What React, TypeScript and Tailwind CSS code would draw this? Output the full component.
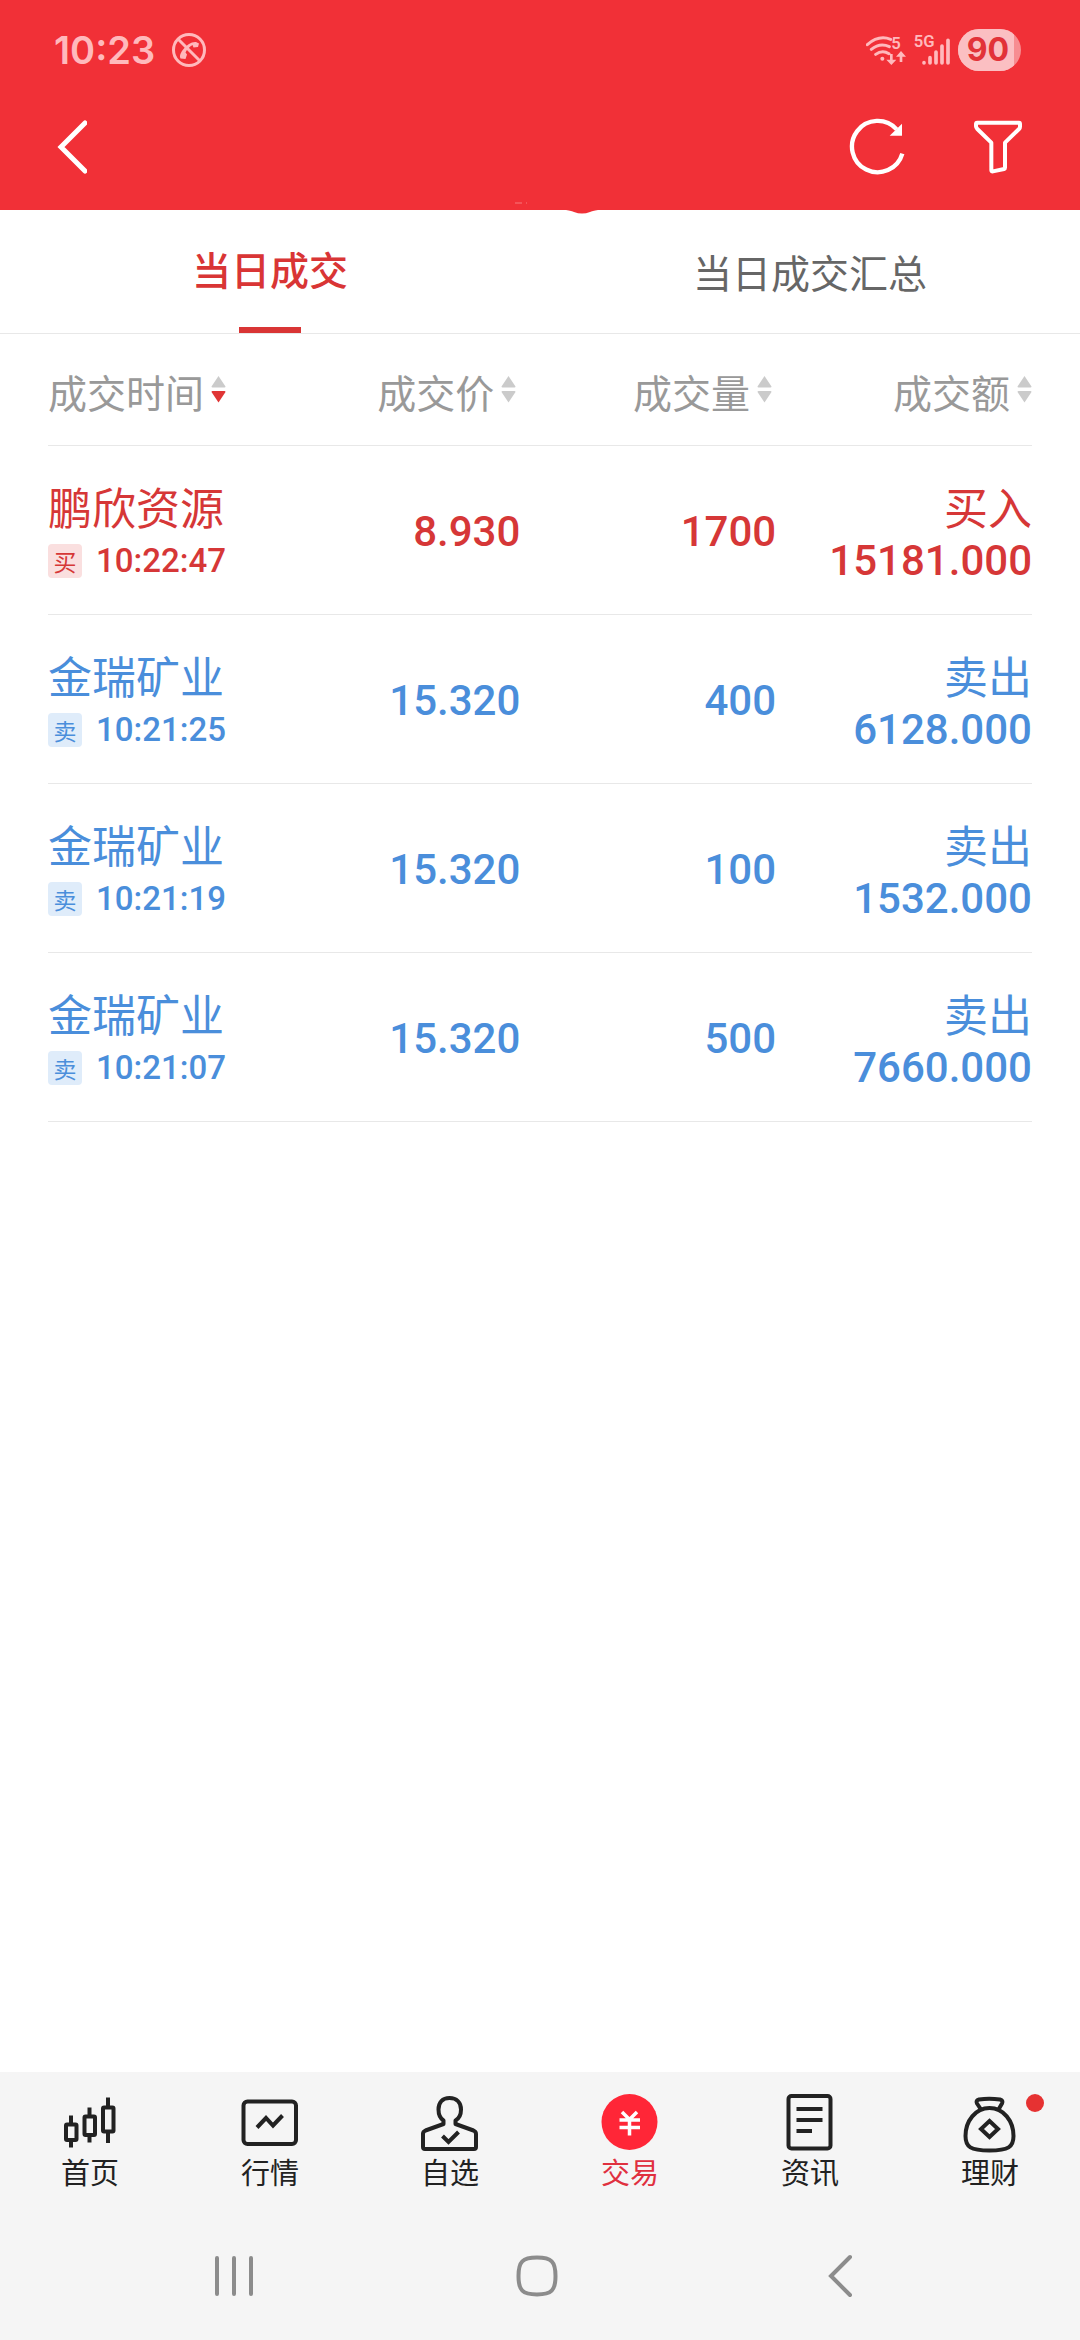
import { useState } from 'react';
import type { ReactNode } from 'react';
import clsx from 'clsx';

type Trade = {
  id: number;
  name: string;
  side: 'buy' | 'sell';
  time: string;
  price: string;
  volume: string;
  amount: string;
};

const trades: Trade[] = [
  { id: 1, name: '鹏欣资源', side: 'buy', time: '10:22:47', price: '8.930', volume: '1700', amount: '15181.000' },
  { id: 2, name: '金瑞矿业', side: 'sell', time: '10:21:25', price: '15.320', volume: '400', amount: '6128.000' },
  { id: 3, name: '金瑞矿业', side: 'sell', time: '10:21:19', price: '15.320', volume: '100', amount: '1532.000' },
  { id: 4, name: '金瑞矿业', side: 'sell', time: '10:21:07', price: '15.320', volume: '500', amount: '7660.000' },
];

const tabs = ['当日成交', '当日成交汇总'];

function StatusBar() {
  return (
    <div className="flex h-[100px] items-center justify-between pl-[54px] pr-[59px] text-[#ffb9bc]">
      <div className="flex items-center gap-4">
        <span className="font-['Inter',sans-serif] text-[38px] font-semibold leading-10">10:23</span>
        <svg className="h-9 w-9" viewBox="0 0 36 36" fill="none" stroke="currentColor" strokeWidth="3">
          <circle cx="18" cy="18" r="15.5" />
          <path d="M7 7l22 22" />
          <path d="M9.500 26.500c-1.500-3 .5-6.500 3.500-10s7.500-7 12-6.500l3 1.500-1 3.500-4.500.5-1-2.500c-3 1.500-6 5-7 7.500l1.500 2-1.500 4.500z" fill="currentColor" stroke="none" />
        </svg>
      </div>
      <div className="flex items-center gap-2">
        <svg className="h-9 w-10" viewBox="196 96 120 108" fill="none" stroke="currentColor" strokeWidth="9">
          <path d="M200 134q34-30 70-16M212 148q26-21 54-8M225 163q20-15 40-2" strokeLinecap="round" />
          <circle cx="245" cy="176" r="6" fill="currentColor" stroke="none" />
          <path d="M272 162v26M301 186v-26" strokeWidth="8" />
          <path d="M257 179h30l-15 16zM286 170h30l-15-17z" fill="currentColor" stroke="none" />
          <text x="272" y="147" fontSize="50" fontFamily="Roboto, sans-serif" fontWeight="600" fill="currentColor" stroke="none">5</text>
        </svg>
        <svg className="h-9 w-9" viewBox="339 96 108 108" fill="none" stroke="currentColor" strokeWidth="11" strokeLinecap="round">
          <text x="338" y="140" fontSize="50" fontFamily="Roboto, sans-serif" fontWeight="600" fill="currentColor" stroke="none">5G</text>
          <path d="M369 188v1M387 173v16M405 156v33M423 138v51M441 121v68" />
        </svg>
        <div className="flex h-[42px] w-[63px] overflow-hidden rounded-full bg-[#f78d91]">
          <span className="w-14 bg-[#fbbfc2] pl-1 text-center font-['Inter',sans-serif] text-[32px] font-bold leading-[42px] text-[#e23238]">
            90
          </span>
        </div>
      </div>
    </div>
  );
}

function TopBar() {
  return (
    <div className="flex h-[94px] items-center justify-between pl-12 pr-[52px] text-white">
      <button type="button" aria-label="返回" className="flex h-16 w-12 items-center justify-center">
        <svg className="h-[54px] w-[30px]" viewBox="0 0 30 54" fill="none" stroke="currentColor" strokeWidth="5" strokeLinecap="round">
          <path d="M28 3L4 27l24 24" />
        </svg>
      </button>
      <div className="flex items-center gap-[60px]">
        <button type="button" aria-label="刷新">
          <svg className="h-[60px] w-[60px]" viewBox="142 351 180 180" fill="none" stroke="currentColor" strokeWidth="13">
            <path d="M305 461A77 77 0 1 1 288 388" />
            <path d="M304 371v36h-37z" fill="currentColor" stroke="none" />
          </svg>
        </button>
        <button type="button" aria-label="筛选">
          <svg className="h-[60px] w-[60px]" viewBox="498 351 180 180" fill="none" stroke="currentColor" strokeWidth="12" strokeLinejoin="round">
            <path d="M526 368h125q3 0 3 4v8q0 4-3 7l-42 41v75q0 3-3 4l-33 7q-5 1-5-3v-83l-42-41q-4-4-4-8v-7q0-4 4-4z" />
          </svg>
        </button>
      </div>
    </div>
  );
}

function SortIcon({ down }: { down?: boolean }) {
  return (
    <svg className="mb-1 h-7 w-[15px] shrink-0" viewBox="0 0 15 28">
      <path d="M7.500 1L14.500 11.500q0 1-1 1h-12q-1 0-1-1z" fill="#cbcbcb" />
      <path d="M7.500 27.500L14.500 17q0-1-1-1h-12q-1 0-1 1z" fill={down ? '#e03535' : '#cbcbcb'} />
    </svg>
  );
}

function HeadCell({ label, down, className }: { label: string; down?: boolean; className?: string }) {
  return (
    <th scope="col" className={clsx('pb-2 font-normal', className)}>
      <button type="button" className="inline-flex items-center gap-[7px] whitespace-nowrap align-middle leading-[48px]">
        {label}
        <SortIcon down={down} />
      </button>
    </th>
  );
}

function TradeRow({ trade }: { trade: Trade }) {
  const buy = trade.side === 'buy';
  return (
    <tr className={clsx('h-[169px] border-b border-[#e8e8e8]', buy ? 'text-[#d63737]' : 'text-[#4a8edb]')}>
      <td className="pt-1">
        <div className="text-[44px] leading-[58px]">{trade.name}</div>
        <div className="flex h-[52px] items-center gap-[14px]">
          <span className={clsx('h-[34px] w-[34px] rounded-sm text-center text-[23px] leading-[34px]', buy ? 'bg-[#fadfdf]' : 'bg-[#dfecfa]')}>
            {buy ? '买' : '卖'}
          </span>
          <span className="font-['Roboto',sans-serif] text-[33px] font-medium leading-[52px]">{trade.time}</span>
        </div>
      </td>
      <td className="pt-1 text-right font-['Roboto',sans-serif] text-[42px] font-medium">{trade.price}</td>
      <td className="pt-1 text-right font-['Roboto',sans-serif] text-[42px] font-medium">{trade.volume}</td>
      <td className="pt-1 text-right">
        <div className="text-[44px] leading-[58px]">{buy ? '买入' : '卖出'}</div>
        <div className="font-['Roboto',sans-serif] text-[42px] font-medium leading-[52px]">{trade.amount}</div>
      </td>
    </tr>
  );
}

function NavIcon({ children }: { children: ReactNode }) {
  return (
    <svg className="h-[62px] w-[60px]" viewBox="0 0 60 62" fill="none" stroke="currentColor" strokeWidth="4" strokeLinejoin="round">
      {children}
    </svg>
  );
}

const navItems = [
  {
    label: '首页',
    icon: (
      <NavIcon>
        <rect x="6" y="32.500" width="10.500" height="15.500" rx="1" />
        <rect x="24.500" y="24.500" width="10.500" height="18.500" rx="1" />
        <rect x="43" y="15.500" width="10.500" height="24" rx="1" />
        <path d="M11 23.500v9M11 48v7.500M29.500 15.500v9M29.500 43v7.500M48 5.500v10M48 39.500v11.500" />
      </NavIcon>
    ),
  },
  {
    label: '行情',
    icon: (
      <NavIcon>
        <rect x="3.500" y="9.500" width="52.500" height="42.500" rx="4" />
        <path d="M17 35.500l9-9.500 7 7.500 9.500-10" strokeLinejoin="miter" />
      </NavIcon>
    ),
  },
  {
    label: '自选',
    icon: (
      <NavIcon>
        <path d="M23.500 28.500c-3-2-5-6-5-11 0-7 4-11.500 11-11.500s11.500 4.500 11.500 11.500c0 5-2 9-5.500 11v3.500l18 6.500q2.500 1 2.500 3.500v13q0 2-2 2h-49q-2 0-2-2v-13q0-2.500 2.500-3.500l18-6.500z" />
        <path d="M22.500 44l6 6 10-10" strokeLinejoin="miter" />
      </NavIcon>
    ),
  },
  {
    label: '交易',
    icon: (
      <NavIcon>
        <circle cx="29.500" cy="30" r="28" fill="#ff2637" stroke="none" />
        <path d="M22 20l7.500 7.500 7.500-7.500M19.500 28h20.500M19.500 35.500h20.500M29.500 27.500v16" stroke="#fff" strokeWidth="3.5" />
      </NavIcon>
    ),
  },
  {
    label: '资讯',
    icon: (
      <NavIcon>
        <rect x="8.500" y="4" width="42" height="52.500" rx="3" />
        <path d="M16.500 17h26M16.500 28h26M16.500 39h15.500" />
      </NavIcon>
    ),
  },
  {
    label: '理财',
    icon: (
      <NavIcon>
        <path d="M21 17.500l-4-6q-1.500-3 2-4 10-1.500 21 0 3.500 1 2 4l-3.500 6" />
        <path d="M29.500 16c-14 0-24 13-24 28 0 11 5 14.500 24 14.500s24-3.500 24-14.500c0-15-10-28-24-28z" />
        <path d="M29.500 29l8.500 8-8.500 8-8.500-8z" strokeLinejoin="miter" />
      </NavIcon>
    ),
    dot: true,
  },
];

export default function App() {
  const [activeTab, setActiveTab] = useState('当日成交');

  return (
    <div className="flex min-h-screen flex-col bg-white font-['Noto_Sans_CJK_SC',sans-serif]">
      <header className="relative bg-[#f13037] pb-4">
        <StatusBar />
        <TopBar />
        <svg className="absolute -bottom-1 left-[47%] h-3 w-24" viewBox="0 0 96 12">
          <path d="M58 8h32q-6 1-8 2-8 3-16 0-2-1-8-2z" fill="#f13037" />
          <path d="M7 1h7M18 1h1" stroke="#f7797d" />
        </svg>
      </header>

      <div role="tablist" className="flex h-[124px] border-b border-[#e8e8e8]">
        {tabs.map((tab) => (
          <button
            key={tab}
            type="button"
            role="tab"
            aria-selected={tab === activeTab}
            onClick={() => setActiveTab(tab)}
            className={clsx(
              'flex flex-1 flex-col items-center text-[39px]',
              tab === activeTab ? 'font-medium text-[#d93535]' : 'text-[#666666]',
            )}
          >
            <span className="flex flex-1 items-center">{tab}</span>
            {tab === activeTab && <span className="h-[6px] w-[62px] bg-[#d93535]" />}
          </button>
        ))}
      </div>

      <main className="flex-1 px-12">
        <table className="w-full table-fixed border-collapse">
          <colgroup>
            <col className="w-[22%]" />
            <col className="w-[26%]" />
            <col className="w-[26%]" />
            <col className="w-[26%]" />
          </colgroup>
          <thead>
            <tr className="h-[111px] border-b border-[#e8e8e8] text-[39px] text-[#999999]">
              <HeadCell label="成交时间" down className="text-left" />
              <HeadCell label="成交价" className="pr-1 text-right" />
              <HeadCell label="成交量" className="pr-1 text-right" />
              <HeadCell label="成交额" className="text-right" />
            </tr>
          </thead>
          <tbody>
            {trades.map((trade) => (
              <TradeRow key={trade.id} trade={trade} />
            ))}
          </tbody>
        </table>
      </main>

      <footer className="bg-[#f5f5f5]">
        <nav className="grid grid-cols-6 pt-5">
          {navItems.map((item) => (
            <a
              key={item.label}
              href="#"
              className={clsx('relative flex flex-col items-center text-[29px] leading-[34px]', item.label === '交易' ? 'text-[#e0303f]' : 'text-[#222222]')}
            >
              {item.icon}
              {item.label}
              {item.dot && <span className="absolute right-9 top-[2px] h-[18px] w-[18px] rounded-full bg-[#e63232]" />}
            </a>
          ))}
        </nav>
        {/* system navigation */}
        <div className="flex h-[152px] items-center justify-between pl-[204px] pr-[210px] pt-6 text-[#8c8c8c]">
          <button type="button" aria-label="最近任务">
            <svg className="h-[60px] w-[60px]" viewBox="0 0 60 60" stroke="currentColor" strokeWidth="4" strokeLinecap="round">
              <path d="M13 12v36M30 12v36M47 12v36" />
            </svg>
          </button>
          <button type="button" aria-label="主屏幕">
            <svg className="h-[60px] w-[60px]" viewBox="0 0 60 60" fill="none" stroke="currentColor" strokeWidth="4">
              <path d="M30 11.500c14.500 0 18.500 4 18.500 18.500s-4 18.500-18.500 18.500-18.500-4-18.500-18.500 4-18.500 18.500-18.500z" />
            </svg>
          </button>
          <button type="button" aria-label="返回上一页">
            <svg className="h-[60px] w-[60px]" viewBox="0 0 60 60" fill="none" stroke="currentColor" strokeWidth="4" strokeLinecap="round">
              <path d="M40 11L21 30l19 19" />
            </svg>
          </button>
        </div>
      </footer>
    </div>
  );
}
